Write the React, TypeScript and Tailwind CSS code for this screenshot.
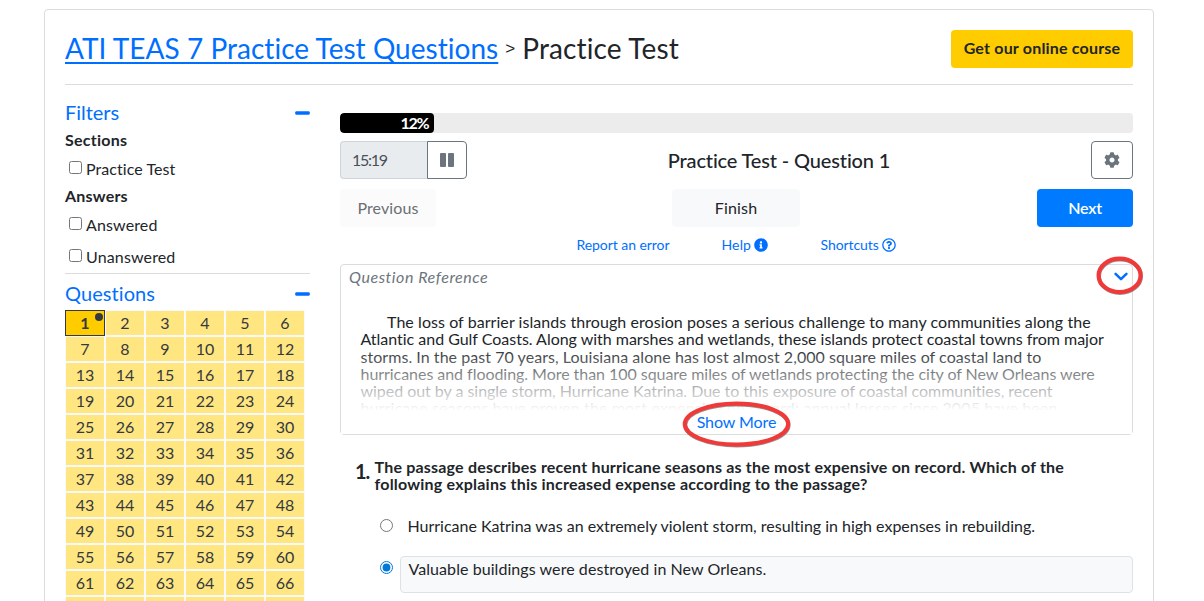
import type { ReactNode } from "react";
import { FaCog, FaInfoCircle, FaRegQuestionCircle } from "react-icons/fa";

function Minus() {
  return (
    <svg width="15" height="4" viewBox="0 0 15 4" className="mt-[2px]">
      <rect x="0.2" y="0.2" width="14.6" height="3.6" rx="1.4" fill="#006fff" />
    </svg>
  );
}

function SectionHeading({ children }: { children: ReactNode }) {
  return (
    <div className="flex h-[22px] items-center justify-between text-[20px] leading-[22px] text-[#006fff]">
      {children}
      <Minus />
    </div>
  );
}

function Filter({ children }: { children: ReactNode }) {
  return (
    <label className="flex h-6 items-start pl-1 leading-6">
      <input type="checkbox" className="mt-1 mr-1 h-[13px] w-[13px]" />
      {children}
    </label>
  );
}

function Sidebar() {
  const numbers = Array.from({ length: 72 }, (_, i) => i + 1);
  return (
    <aside className="w-[245px] shrink-0 pt-4">
      <SectionHeading>
        <span className="tracking-[-0.05px]">Filters</span>
      </SectionHeading>
      <h3 className="mt-[5px] leading-6 font-bold tracking-[0.24px]">Sections</h3>
      <div className="mt-[5px]">
        <Filter>
          <span className="tracking-[0.06px]">Practice Test</span>
        </Filter>
      </div>
      <h3 className="mt-[3px] leading-6 font-bold tracking-[0.2px]">Answers</h3>
      <div className="mt-[5px] flex flex-col gap-2">
        <Filter>
          <span className="tracking-[0.13px]">Answered</span>
        </Filter>
        <Filter>
          <span className="tracking-[0.14px]">Unanswered</span>
        </Filter>
      </div>
      <hr className="mt-1 mb-2 border-[#dcdcdc]" />
      <SectionHeading>
        <span className="tracking-[0.08px]">Questions</span>
      </SectionHeading>
      <div className="mt-[6px] grid w-60 grid-cols-6 bg-[#f8f9fa] text-center text-[#343a40]">
        {numbers.map((n) =>
          n === 1 ? (
            <div key={n} className="relative h-[26px] border border-[#343a40] bg-[#ffcc00] leading-[23px] font-bold">
              1
              <span className="absolute top-[2px] right-[1px] h-2 w-2 rounded-full bg-[#343a40]" />
            </div>
          ) : (
            <div key={n} className="h-[26px] border border-[#f8f9fa] bg-[#ffe680] leading-6">
              {n}
            </div>
          )
        )}
      </div>
    </aside>
  );
}

function Toolbar() {
  return (
    <>
      <div className="flex h-5 overflow-hidden rounded bg-[#ececec]">
        <div className="w-[93.5px] rounded bg-black pr-[5px] text-right leading-[19px] font-bold tracking-[-1.2px] text-white">
          12%
        </div>
      </div>
      <div className="mt-2 flex h-[38px] justify-between">
        <div className="flex w-[127px]">
          <div className="w-[88px] rounded-l border border-r-0 border-[#ced4da] bg-[#e9ecef] pl-[11px] leading-[35px] tracking-[-1.3px] text-[#495057]">
            15:19
          </div>
          <button className="-ml-px flex w-10 items-center justify-center gap-[2px] rounded-r border border-[#6c757d]">
            <span className="h-[14px] w-[6px] rounded-[1px] bg-[#6c757d]" />
            <span className="h-[14px] w-[6px] rounded-[1px] bg-[#6c757d]" />
          </button>
        </div>
        <h2 className="text-[20px] leading-[38px] font-medium tracking-[-0.15px]">Practice Test - Question 1</h2>
        <button className="flex w-[42px] items-center justify-center rounded border border-[#6c757d] text-[#6c757d]">
          <FaCog size={16} />
        </button>
      </div>
      <div className="mt-[10px] flex h-[38px] leading-[38px]">
        <button className="w-24 rounded bg-[#fbfbfc] tracking-[0.1px] text-[#6c6f73]">Previous</button>
        <button className="ml-[236px] w-32 rounded bg-[#f8f9fa] tracking-[0.17px]">Finish</button>
        <button className="ml-auto w-24 rounded bg-[#007bff] font-semibold tracking-[-0.2px] text-white">Next</button>
      </div>
      <div className="mt-2 flex h-5 pl-[236.5px] text-sm leading-5 text-[#006fff]">
        <a className="w-[145px] tracking-[-0.06px]">Report an error</a>
        <a className="flex w-[99px] items-center">
          <span className="mr-[3px] tracking-[0.15px]">Help</span>
          <FaInfoCircle size={14} />
        </a>
        <a className="flex items-center">
          <span className="mr-[3px] tracking-[-0.07px]">Shortcuts</span>
          <FaRegQuestionCircle size={14} />
        </a>
      </div>
    </>
  );
}

function Passage() {
  return (
    <section className="relative mt-[9px] h-[171px] rounded border border-[#dcdcdc] pt-[2px]">
      <div className="flex h-6 justify-between pr-1 pl-2 leading-[20px] text-[#6c757d] italic">
        <span className="tracking-[0.55px]">Question Reference</span>
        <svg width="14" height="9" viewBox="0 0 14 9" className="mt-[5px]" fill="none" stroke="#006fff" strokeWidth="2.5" strokeLinecap="round" strokeLinejoin="round">
          <path d="M1.6 1.9 7 7.2 12.4 1.9" />
        </svg>
      </div>
      <div className="mt-[22px] h-[97px] overflow-hidden pl-[19.5px] leading-[17.25px] whitespace-nowrap">
        <p className="pl-[26.5px] tracking-[0.064px]">The loss of barrier islands through erosion poses a serious challenge to many communities along the</p>
        <p className="tracking-[-0.016px]">Atlantic and Gulf Coasts. Along with marshes and wetlands, these islands protect coastal towns from major</p>
        <p className="tracking-[0.046px]">storms. In the past 70 years, Louisiana alone has lost almost 2,000 square miles of coastal land to</p>
        <p className="tracking-[-0.045px]">hurricanes and flooding. More than 100 square miles of wetlands protecting the city of New Orleans were</p>
        <p className="tracking-[-0.034px]">wiped out by a single storm, Hurricane Katrina. Due to this exposure of coastal communities, recent</p>
        <p className="tracking-[0.127px]">hurricane seasons have proven the most expensive on record; annual losses since 2005 have been</p>
      </div>
      <div className="absolute inset-x-0 top-[80px] bottom-0 flex items-end justify-center bg-linear-to-b from-transparent to-white to-[66px] text-[#006fff]">
        <span className="tracking-[-0.08px]">Show More</span>
      </div>
      <svg width="50" height="42" className="absolute top-[-10px] right-[-12px]" fill="none">
        <ellipse cx="26" cy="21.2" rx="21" ry="16.7" stroke="#6b6b6b" strokeOpacity="0.7" strokeWidth="4" />
        <ellipse cx="25.6" cy="20.4" rx="21" ry="16.7" stroke="#f03a3a" strokeWidth="4.2" />
      </svg>
      <svg width="112" height="50" className="absolute top-[134px] left-[340px]" fill="none">
        <ellipse cx="55.9" cy="25.9" rx="51.7" ry="20.5" stroke="#6b6b6b" strokeOpacity="0.7" strokeWidth="4" />
        <ellipse cx="55.5" cy="25.1" rx="51.7" ry="20.5" stroke="#f03a3a" strokeWidth="4.2" />
      </svg>
    </section>
  );
}

function Question() {
  return (
    <section className="mt-[24px] pl-[15px]">
      <div className="flex">
        <span className="w-[19.5px] text-[20px] leading-6 font-bold tracking-[-1px]">1.</span>
        <h3 className="-mt-px leading-[17.25px] font-bold whitespace-nowrap">
          <span className="block tracking-[0.2px]">The passage describes recent hurricane seasons as the most expensive on record. Which of the</span>
          <span className="block tracking-[0.212px]">following explains this increased expense according to the passage?</span>
        </h3>
      </div>
      <label className="mt-6 flex pl-[25px]">
        <input type="radio" name="answer" className="mt-[2px] h-[13px] w-[13px]" />
        <span className="ml-[14.5px] leading-[18px] tracking-[-0.01px]">Hurricane Katrina was an extremely violent storm, resulting in high expenses in rebuilding.</span>
      </label>
      <label className="mt-[21px] flex pl-[25px]">
        <input type="radio" name="answer" defaultChecked className="mt-[5px] h-[13px] w-[13px] accent-[#0078d7]" />
        <span className="ml-[7px] h-[37px] flex-1 rounded border border-[#dee2e6] bg-[#f8f9fa] pl-[7.5px] leading-[24px] tracking-[0.069px]">Valuable buildings were destroyed in New Orleans.</span>
      </label>
    </section>
  );
}

export default function App() {
  return (
    <div className="h-[601px] overflow-hidden bg-white pt-[9px] pl-11 font-['Lato','Liberation_Sans',sans-serif] text-base text-[#212529]">
      <main className="h-[640px] w-[1110px] rounded border border-[#dcdcdc] px-5">
        <header className="flex h-[75px] items-start justify-between border-b border-[#dcdcdc] pt-5">
          <h1 className="flex items-center text-[28px] leading-[36px]">
            <a className="tracking-[0.03px] text-[#006fff] underline decoration-2 underline-offset-[3px] [text-decoration-skip-ink:none]">ATI TEAS 7 Practice Test Questions</a>
            <span className="mr-[7px] ml-[7px] pt-[2px] font-['Liberation_Sans'] text-[17px] leading-6">&gt;</span>
            <span className="tracking-[0.14px]">Practice Test</span>
          </h1>
          <button className="h-[38px] w-[182px] rounded bg-[#ffcc00] pb-[2px] font-bold tracking-[0.195px]">Get our online course</button>
        </header>
        <div className="flex gap-[30px]">
          <Sidebar />
          <div className="flex-1 pt-7">
            <Toolbar />
            <Passage />
            <Question />
          </div>
        </div>
      </main>
    </div>
  );
}
